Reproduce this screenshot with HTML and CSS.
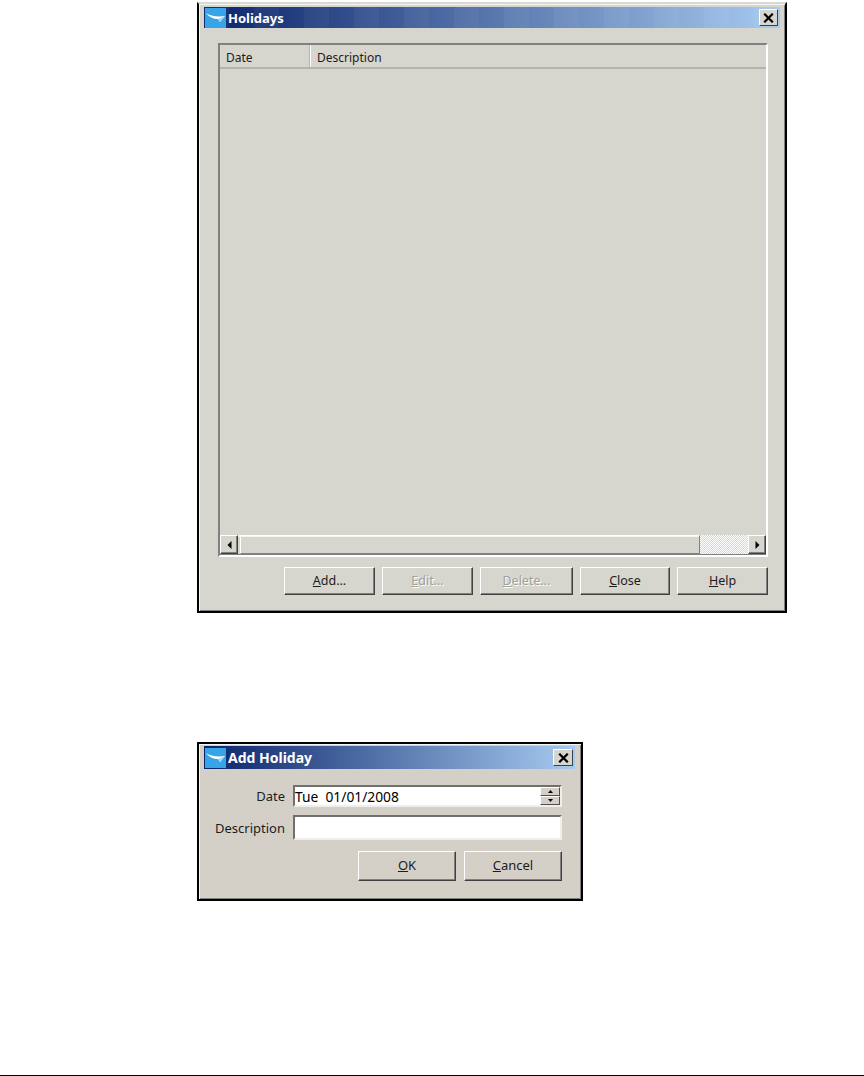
FILE: index.html
```html
<!doctype html>
<html lang="en">
  <head>
    <meta charset="UTF-8" />
    <title>Holidays</title>
    <link rel="stylesheet" href="styles.css">
  </head>
  <body>
    <div class="page">
      <div class="window window-holidays">
        <div class="titlebar">
          <svg class="logo" viewBox="0 0 21 20">
            <rect width="21" height="20" fill="#36a4e6" />
            <path d="M1 5 C5 8 12 9 20 8 L15 14 L13 11 C8 11 4 9 1 5z" fill="#fff" />
            <path d="M13 11 L20 8 L15 14z" fill="#a8d4f0" />
          </svg>
          <span class="title">Holidays</span>
          <button class="close-x"><svg viewBox="0 0 9 8"><path d="M1 0.5 L8 7.5 M8 0.5 L1 7.5" stroke="#000" stroke-width="1.8" fill="none" /></svg></button>
        </div>
        <div class="body-holidays">
          <div class="list">
            <div class="list-head">
              <div class="col col-date">Date</div>
              <div class="col col-desc">Description</div>
            </div>
            <div class="list-rows"></div>
            <div class="scrollbar">
              <div class="sb-btn"><svg viewBox="0 0 5 8"><path d="M4.5 0 L0.5 4 L4.5 8z" fill="#000" /></svg></div>
              <div class="sb-thumb"></div>
              <div class="sb-track"></div>
              <div class="sb-btn"><svg viewBox="0 0 5 8"><path d="M0.5 0 L4.5 4 L0.5 8z" fill="#000" /></svg></div>
            </div>
          </div>
          <div class="actions">
            <button class="btn btn-add"><u>A</u>dd...</button>
            <button class="btn btn-edit" disabled><u>E</u>dit...</button>
            <button class="btn btn-delete" disabled><u>D</u>elete...</button>
            <button class="btn btn-close"><u>C</u>lose</button>
            <button class="btn btn-help"><u>H</u>elp</button>
          </div>
        </div>
      </div>

      <div class="window window-add">
        <div class="titlebar">
          <svg class="logo" viewBox="0 0 21 20">
            <rect width="21" height="20" fill="#36a4e6" />
            <path d="M1 5 C5 8 12 9 20 8 L15 14 L13 11 C8 11 4 9 1 5z" fill="#fff" />
            <path d="M13 11 L20 8 L15 14z" fill="#a8d4f0" />
          </svg>
          <span class="title">Add Holiday</span>
          <button class="close-x"><svg viewBox="0 0 9 8"><path d="M1 0.5 L8 7.5 M8 0.5 L1 7.5" stroke="#000" stroke-width="1.8" fill="none" /></svg></button>
        </div>
        <div class="body-add">
          <div class="field">
            <label>Date</label>
            <div class="input input-date">
              <span class="value">Tue&nbsp; 01/01/2008</span>
              <div class="spinner">
                <div class="spin-btn"><svg viewBox="0 0 5 3"><path d="M2.5 0 L5 3 L0 3z" fill="#000" /></svg></div>
                <div class="spin-btn"><svg viewBox="0 0 5 3"><path d="M0 0 L5 0 L2.5 3z" fill="#000" /></svg></div>
              </div>
            </div>
          </div>
          <div class="field field-desc">
            <label>Description</label>
            <div class="input input-desc"></div>
          </div>
          <div class="actions-add">
            <button class="btn btn-ok"><u>O</u>K</button>
            <button class="btn btn-cancel"><u>C</u>ancel</button>
          </div>
        </div>
      </div>
    </div>
    <div class="footer-rule"></div>
  </body>
</html>
```

FILE: styles.css
```css
* {
  margin: 0;
  padding: 0;
  box-sizing: border-box;
}

html,
body {
  background: #fff;
  height: 1076px;
  overflow: hidden;
}

body {
  font-family: "Noto Sans", "Open Sans", sans-serif;
  font-size: 12px;
  color: #1c1c1c;
  display: flex;
  flex-direction: column;
}

.page {
  flex: 1;
  display: flex;
  flex-direction: column;
  align-items: flex-start;
  padding: 2px 0 0 197px;
  gap: 129px;
}

.footer-rule {
  height: 1px;
  background: #000;
}

.window {
  border: 2px solid #000;
  box-shadow: inset 1px 1px 0 #f4f4f0, inset -1px -1px 0 #808080;
  padding: 5px;
}

.window-holidays {
  width: 590px;
  height: 611px;
  background: #d6d5ce;
  border-top-color: #d8d8d4;
  padding-top: 3px;
}

.window-add {
  width: 386px;
  height: 159px;
  background: #d4d0c8;
  padding: 2px 6px 0 5px;
}

.titlebar {
  height: 21px;
  display: flex;
  align-items: center;
  background:
    repeating-linear-gradient(90deg, rgba(255, 255, 255, 0.04) 0 25px, transparent 25px 50px),
    linear-gradient(90deg, #0a246a 0%, #a6caf0 100%);
  color: #fff;
}

.window-add .titlebar {
  height: 23px;
  background: linear-gradient(90deg, #0a246a 0%, #a6caf0 100%);
}

.logo {
  width: 21px;
  height: 20px;
  margin-left: 1px;
  flex: none;
}

.title {
  font-weight: 700;
  font-size: 13px;
  margin-left: 2px;
  flex: 1;
  white-space: nowrap;
}

.window-add .title {
  font-size: 14px;
}

.close-x {
  width: 19px;
  height: 17px;
  margin-right: 2px;
  border: 1px solid;
  border-color: #fff #404040 #404040 #fff;
  background: #d6d5ce;
  display: flex;
  align-items: center;
  justify-content: center;
}

.window-add .close-x {
  width: 20px;
}

.close-x svg {
  width: 11px;
  height: 10px;
}

.body-holidays {
  padding: 15px 12px 0 14px;
}

.list {
  height: 514px;
  border: 2px solid;
  border-color: #808080 #fff #fff #808080;
  display: flex;
  flex-direction: column;
}

.list-head {
  height: 24px;
  display: flex;
  border-bottom: 2px solid #b4b3ac;
  flex: none;
}

.col {
  padding: 4px 6px 0;
  line-height: 18px;
  border-left: 1px solid #fff;
}

.col-date {
  width: 90px;
  border-right: 1px solid #b4b3ac;
  border-left: none;
}

.col-desc {
  flex: 1;
}

.list-rows {
  flex: 1;
}

.scrollbar {
  height: 20px;
  display: flex;
  flex: none;
  border-bottom: 1px solid #808080;
  box-shadow: inset 0 2px 0 #f4f4f0;
}

.sb-btn {
  width: 18px;
  border: 1px solid;
  border-color: #fff #404040 #404040 #fff;
  box-shadow: inset -1px -1px 0 #808080;
  background: #d6d5ce;
  display: flex;
  align-items: center;
  justify-content: center;
  flex: none;
}

.sb-btn svg {
  width: 5px;
  height: 8px;
}

.sb-thumb {
  width: 460px;
  border: 1px solid;
  border-color: #fff #808080 #808080 #fff;
  margin-left: 2px;
}

.sb-track {
  flex: 1;
  background: repeating-conic-gradient(#fff 0 25%, #d6d5ce 0 50%) 0 0 / 2px 2px;
}

.actions {
  display: flex;
  margin-top: 10px;
  margin-left: 66px;
  gap: 7px;
}

.btn {
  font-family: "Noto Sans", "Open Sans", sans-serif;
  font-size: 12.5px;
  color: #1c1c1c;
  height: 28px;
  padding-bottom: 2px;
  background: #d6d5ce;
  border: 1px solid;
  border-color: #fff #404040 #404040 #fff;
  box-shadow: inset -1px -1px 0 #808080;
}

.btn:disabled {
  color: #a0a09a;
  text-shadow: 1px 1px 0 #fff;
}

.btn-add { width: 91px; }
.btn-edit { width: 91px; }
.btn-delete { width: 93px; }
.btn-close { width: 90px; }
.btn-help { width: 91px; }

.body-add {
  padding: 16px 13px 0 0;
  font-size: 13px;
}

.field {
  display: flex;
  align-items: center;
  gap: 8px;
}

.field label {
  width: 81px;
  text-align: right;
}

.field-desc {
  margin-top: 8px;
}

.input {
  flex: 1;
  background: #fff;
  border: 2px solid;
  border-color: #707070 #f0eeea #f0eeea #707070;
  display: flex;
  align-items: center;
}

.input-date {
  height: 22px;
}

.input-desc {
  height: 25px;
}

.value {
  flex: 1;
  font-size: 13.8px;
  color: #000;
  white-space: nowrap;
}

.spinner {
  width: 20px;
  height: 18px;
  display: flex;
  flex-direction: column;
  flex: none;
}

.spin-btn {
  flex: 1;
  background: #d4d0c8;
  border: 1px solid;
  border-color: #fff #505050 #505050 #fff;
  display: flex;
  align-items: center;
  justify-content: center;
}

.spin-btn svg {
  width: 5px;
  height: 3px;
}

.actions-add {
  display: flex;
  justify-content: flex-end;
  gap: 8px;
  margin-top: 11px;
}

.window-add .btn {
  width: 98px;
  height: 30px;
  font-size: 13px;
  background: #d4d0c8;
}
```
